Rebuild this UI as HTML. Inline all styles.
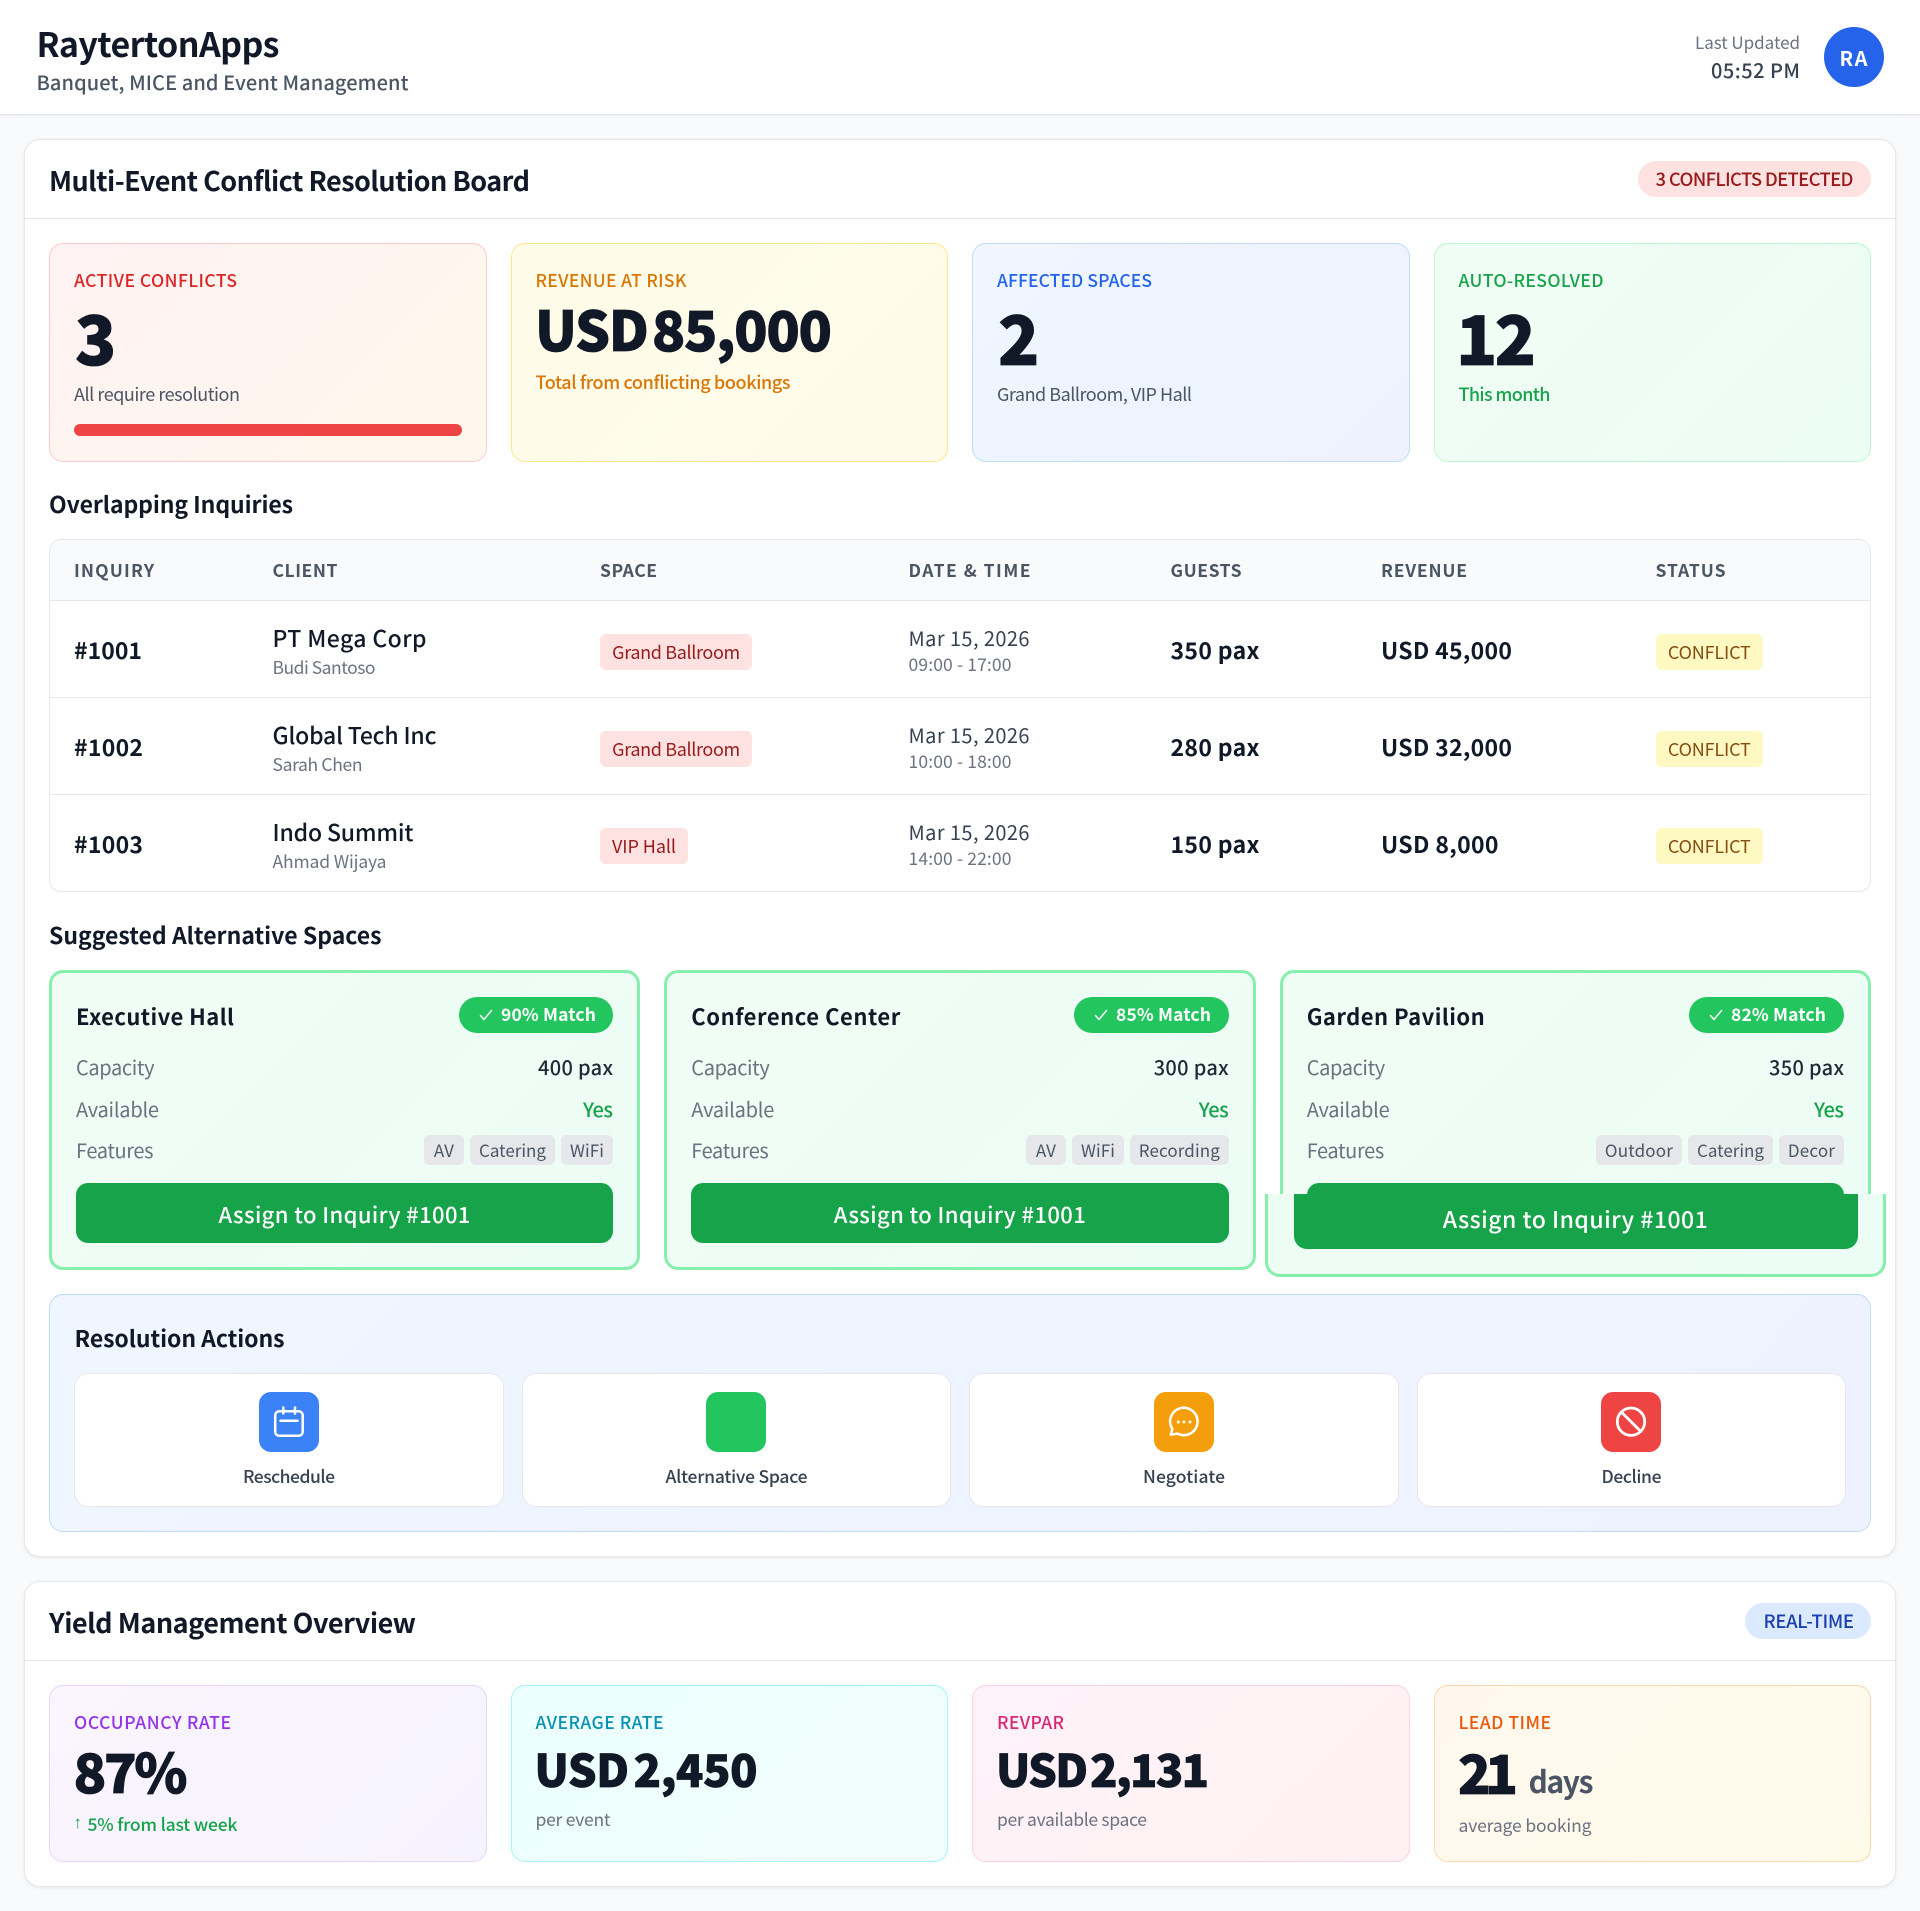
<!DOCTYPE html>
<html lang="en">
<head>
<meta charset="utf-8">
<title>RaytertonApps</title>
<style>
*{box-sizing:border-box;margin:0;padding:0}
html,body{width:1920px;height:1911px;overflow:hidden;background:#f9fafb}
body{position:relative;font-family:"Noto Sans CJK SC","Liberation Sans",sans-serif;color:#111827}
.b,.t{position:absolute}
.t{white-space:nowrap;line-height:40px;margin-top:-21px}
.card{background:#fff;border:1px solid #e5e7eb;border-radius:16px;box-shadow:0 1px 3px rgba(0,0,0,.08)}
.line{height:1px;background:#e5e7eb}
.stat{border-radius:14px;border:1px solid}
.tag{position:absolute;display:flex;align-items:center;justify-content:center;white-space:nowrap}
.sp{height:36px;background:#fee2e2;color:#991b1b;border-radius:6px;font-size:18px}
.st{height:36px;background:#fef9c3;color:#854d0e;border-radius:6px;font-size:18px}
.ft{height:30px;background:#e5e7eb;color:#4b5563;border-radius:6px;font-size:17px;padding-bottom:1px}
.alt{border:3px solid #86efac;border-radius:14px;background:linear-gradient(135deg,#f0fdf4,#ecfdf5)}
.match{height:36px;border-radius:18px;background:#22c55e;color:#fff;font-size:17px;font-weight:700}
.btn{position:absolute;background:#16a34a;color:#fff;border-radius:12px;display:flex;align-items:center;justify-content:center;font-weight:500;font-size:22px}
.act{background:#fff;border:1px solid #e5e7eb;border-radius:14px}
.ic{width:60px;height:60px;border-radius:12px}
.h{font-size:17.5px;font-weight:700;color:#4b5563;margin-top:-20px}
.n{font-weight:700;font-size:23px;margin-top:-22px}
.c{font-size:23px;font-weight:500;margin-top:-22px}
.s{font-size:17.5px;color:#6b7280;margin-top:-20px}
.d{font-size:20px;color:#374151}
.k{font-size:20px;color:#6b7280}
.v{font-size:20px;color:#1f2937;font-weight:500}
.y{font-size:20px;color:#16a34a;font-weight:500}
.l{font-size:17.5px;font-weight:500;margin-top:-20px}
.sec{font-size:23px;font-weight:700}
.big{font-weight:900;color:#111827;-webkit-text-stroke:.8px #111827}
.a{font-size:17.5px;font-weight:500;color:#374151;margin-top:-20px}
</style>
</head>
<body>
<div class="b" style="left:0;top:0;width:1920px;height:115px;background:#fff;border-bottom:1px solid #e5e7eb;box-shadow:0 1px 3px rgba(0,0,0,.06)"></div>
<h1 class="t" style="left:36.5px;top:44px;font-size:34px;font-weight:700;--w:243">RaytertonApps</h1>
<div class="t" style="left:36.5px;top:83px;font-size:20px;font-weight:500;color:#4b5563;--w:372">Banquet, MICE and Event Management</div>
<div class="t" style="left:1695px;top:43px;font-size:17px;color:#6b7280;--w:105">Last Updated</div>
<div class="t" style="left:1711px;top:71px;font-size:20px;font-weight:500;color:#374151;--w:89">05:52 PM</div>
<div class="b" style="left:1823.5px;top:27px;width:60px;height:60px;border-radius:50%;background:#2563eb"></div>
<div class="t" style="left:1839.5px;top:59px;font-size:20px;font-weight:700;color:#fff;--w:28">RA</div>

<!-- Conflict card -->
<div class="b card" style="left:24px;top:139px;width:1872px;height:1418px"></div>
<div class="b line" style="left:25px;top:218px;width:1870px"></div>
<h2 class="t" style="left:49px;top:181px;font-size:27px;font-weight:700;--w:481">Multi-Event Conflict Resolution Board</h2>
<div class="b" style="left:1638px;top:161px;width:233px;height:36px;border-radius:18px;background:#fee2e2"></div>
<div class="t" style="left:1655.5px;top:180px;font-size:18.5px;font-weight:500;color:#991b1b;--w:198">3 CONFLICTS DETECTED</div>

<div class="b stat" style="left:49px;top:243px;width:437.5px;height:219px;background:linear-gradient(135deg,#fef2f2,#fff7ed);border-color:#fecaca"></div>
<div class="b stat" style="left:510.5px;top:243px;width:437.5px;height:219px;background:linear-gradient(135deg,#fefce8,#fffbeb);border-color:#fde68a"></div>
<div class="b stat" style="left:972px;top:243px;width:437.5px;height:219px;background:linear-gradient(135deg,#eff6ff,#eef2ff);border-color:#bfdbfe"></div>
<div class="b stat" style="left:1433.5px;top:243px;width:437.5px;height:219px;background:linear-gradient(135deg,#f0fdf4,#ecfdf5);border-color:#bbf7d0"></div>

<div class="t l" style="left:74px;top:280.5px;color:#dc2626;--w:163">ACTIVE CONFLICTS</div>
<div class="t l" style="left:535.5px;top:280.5px;color:#d97706;--w:151">REVENUE AT RISK</div>
<div class="t l" style="left:997px;top:280.5px;color:#2563eb;--w:155">AFFECTED SPACES</div>
<div class="t l" style="left:1458.5px;top:280.5px;color:#16a34a;--w:145">AUTO-RESOLVED</div>

<div class="t big" style="left:75px;top:337px;font-size:68px;--w:39">3</div>
<div class="t big" style="left:535px;top:328px;font-size:55px;word-spacing:-7px;--w:297">USD 85,000</div>
<div class="t big" style="left:998px;top:337px;font-size:68px;--w:39">2</div>
<div class="t big" style="left:1456px;top:337px;font-size:68px;--w:80">12</div>

<div class="t" style="left:74px;top:395px;font-size:18px;color:#4b5563;--w:166">All require resolution</div>
<div class="b" style="left:74px;top:424px;width:388px;height:12px;border-radius:6px;background:#ef4444"></div>
<div class="t" style="left:535.5px;top:383px;font-size:18px;font-weight:500;color:#d97706;--w:255">Total from conflicting bookings</div>
<div class="t" style="left:997px;top:395px;font-size:18px;color:#4b5563;--w:195">Grand Ballroom, VIP Hall</div>
<div class="t" style="left:1458.5px;top:395px;font-size:18px;font-weight:500;color:#16a34a;--w:92">This month</div>

<!-- Table -->
<h3 class="t sec" style="left:49px;top:504px;--w:244">Overlapping Inquiries</h3>
<div class="b" style="left:49px;top:539px;width:1822px;height:353px;background:#fff;border:1px solid #e5e7eb;border-radius:12px;overflow:hidden">
  <div class="b" style="left:0;top:0;width:100%;height:61px;background:#f9fafb;border-bottom:1px solid #e5e7eb"></div>
  <div class="b line" style="left:0;top:157px;width:100%"></div>
  <div class="b line" style="left:0;top:254px;width:100%"></div>
</div>
<div class="t h" style="left:74px;top:570.5px;--w:80">INQUIRY</div>
<div class="t h" style="left:272.5px;top:570.5px;--w:65">CLIENT</div>
<div class="t h" style="left:600px;top:570.5px;--w:57">SPACE</div>
<div class="t h" style="left:908.5px;top:570.5px;--w:122">DATE &amp; TIME</div>
<div class="t h" style="left:1170.5px;top:570.5px;--w:71">GUESTS</div>
<div class="t h" style="left:1381px;top:570.5px;--w:86">REVENUE</div>
<div class="t h" style="left:1655.5px;top:570.5px;--w:70">STATUS</div>

<div class="t n" style="left:74px;top:651px;--w:68">#1001</div>
<div class="t c" style="left:272.5px;top:639px;--w:154">PT Mega Corp</div>
<div class="t s" style="left:272.5px;top:668px;--w:103">Budi Santoso</div>
<div class="tag sp" style="left:600px;top:634px;width:152px"><span style="--w:128">Grand Ballroom</span></div>
<div class="t d" style="left:908.5px;top:639px;--w:121">Mar 15, 2026</div>
<div class="t s" style="left:908.5px;top:665px;--w:103">09:00 - 17:00</div>
<div class="t n" style="left:1170.5px;top:651px;--w:89">350 pax</div>
<div class="t n" style="left:1381px;top:651px;--w:131">USD 45,000</div>
<div class="tag st" style="left:1655.5px;top:634px;width:107.5px"><span style="--w:83">CONFLICT</span></div>

<div class="t n" style="left:74px;top:748px;--w:69">#1002</div>
<div class="t c" style="left:272.5px;top:736px;--w:164">Global Tech Inc</div>
<div class="t s" style="left:272.5px;top:765px;--w:90">Sarah Chen</div>
<div class="tag sp" style="left:600px;top:731px;width:152px"><span style="--w:128">Grand Ballroom</span></div>
<div class="t d" style="left:908.5px;top:736px;--w:121">Mar 15, 2026</div>
<div class="t s" style="left:908.5px;top:762px;--w:103">10:00 - 18:00</div>
<div class="t n" style="left:1170.5px;top:748px;--w:89">280 pax</div>
<div class="t n" style="left:1381px;top:748px;--w:131">USD 32,000</div>
<div class="tag st" style="left:1655.5px;top:731px;width:107.5px"><span style="--w:83">CONFLICT</span></div>

<div class="t n" style="left:74px;top:845px;--w:69">#1003</div>
<div class="t c" style="left:272.5px;top:833px;--w:141">Indo Summit</div>
<div class="t s" style="left:272.5px;top:862px;--w:114">Ahmad Wijaya</div>
<div class="tag sp" style="left:600px;top:828px;width:88px"><span style="--w:64">VIP Hall</span></div>
<div class="t d" style="left:908.5px;top:833px;--w:121">Mar 15, 2026</div>
<div class="t s" style="left:908.5px;top:859px;--w:103">14:00 - 22:00</div>
<div class="t n" style="left:1170.5px;top:845px;--w:89">150 pax</div>
<div class="t n" style="left:1381px;top:845px;--w:117.5">USD 8,000</div>
<div class="tag st" style="left:1655.5px;top:828px;width:107.5px"><span style="--w:83">CONFLICT</span></div>

<!-- Alternatives -->
<h3 class="t sec" style="left:49px;top:935px;--w:332.5">Suggested Alternative Spaces</h3>
<div class="b alt" style="left:49px;top:970px;width:591.3px;height:300px"></div>
<div class="b alt" style="left:664.3px;top:970px;width:591.3px;height:300px"></div>
<div class="b alt" style="left:1279.7px;top:970px;width:591.3px;height:300px"></div>

<div class="t" style="left:76px;top:1017px;font-size:22px;font-weight:700;--w:158">Executive Hall</div>
<div class="tag match" style="left:459px;top:997px;width:154px"></div>
<svg class="b" style="left:479px;top:1009px" width="14" height="12" viewBox="0 0 14 12" fill="none" stroke="#fff" stroke-width="1.5" stroke-linecap="round" stroke-linejoin="round"><path d="M1.5 6.5 5 10.5 12.5 1.5"/></svg>
<div class="t" style="left:501px;top:1016px;font-size:17.5px;font-weight:700;color:#fff;--w:95">90% Match</div>
<div class="t k" style="left:76px;top:1068px;--w:78.5">Capacity</div>
<div class="t v" style="left:538px;top:1068px;--w:75">400 pax</div>
<div class="t k" style="left:76px;top:1110px;--w:83">Available</div>
<div class="t y" style="left:583px;top:1110px;--w:30">Yes</div>
<div class="t k" style="left:76px;top:1151px;--w:77.5">Features</div>
<div class="tag ft" style="left:424px;top:1135px;width:40px"><span style="--w:20">AV</span></div>
<div class="tag ft" style="left:470px;top:1135px;width:85px"><span style="--w:67">Catering</span></div>
<div class="tag ft" style="left:561px;top:1135px;width:52px"><span style="--w:34">WiFi</span></div>
<div class="btn" style="left:76px;top:1183px;width:537.3px;height:60px;padding-top:2px"><span style="--w:252">Assign to Inquiry #1001</span></div>

<div class="t" style="left:691.3px;top:1017px;font-size:22px;font-weight:700;--w:209">Conference Center</div>
<div class="tag match" style="left:1074px;top:997px;width:154.7px"></div>
<svg class="b" style="left:1094px;top:1009px" width="14" height="12" viewBox="0 0 14 12" fill="none" stroke="#fff" stroke-width="1.5" stroke-linecap="round" stroke-linejoin="round"><path d="M1.5 6.5 5 10.5 12.5 1.5"/></svg>
<div class="t" style="left:1116px;top:1016px;font-size:17.5px;font-weight:700;color:#fff;--w:95">85% Match</div>
<div class="t k" style="left:691.3px;top:1068px;--w:78.5">Capacity</div>
<div class="t v" style="left:1153.7px;top:1068px;--w:75">300 pax</div>
<div class="t k" style="left:691.3px;top:1110px;--w:83">Available</div>
<div class="t y" style="left:1198.7px;top:1110px;--w:30">Yes</div>
<div class="t k" style="left:691.3px;top:1151px;--w:77.5">Features</div>
<div class="tag ft" style="left:1026px;top:1135px;width:40px"><span style="--w:20">AV</span></div>
<div class="tag ft" style="left:1072px;top:1135px;width:52px"><span style="--w:34">WiFi</span></div>
<div class="tag ft" style="left:1130px;top:1135px;width:98.7px"><span style="--w:81">Recording</span></div>
<div class="btn" style="left:691.3px;top:1183px;width:537.3px;height:60px;padding-top:2px"><span style="--w:252">Assign to Inquiry #1001</span></div>

<div class="t" style="left:1306.7px;top:1017px;font-size:22px;font-weight:700;--w:178">Garden Pavilion</div>
<div class="tag match" style="left:1689px;top:997px;width:155px"></div>
<svg class="b" style="left:1709px;top:1009px" width="14" height="12" viewBox="0 0 14 12" fill="none" stroke="#fff" stroke-width="1.5" stroke-linecap="round" stroke-linejoin="round"><path d="M1.5 6.5 5 10.5 12.5 1.5"/></svg>
<div class="t" style="left:1731px;top:1016px;font-size:17.5px;font-weight:700;color:#fff;--w:95">82% Match</div>
<div class="t k" style="left:1306.7px;top:1068px;--w:78.5">Capacity</div>
<div class="t v" style="left:1769px;top:1068px;--w:75">350 pax</div>
<div class="t k" style="left:1306.7px;top:1110px;--w:83">Available</div>
<div class="t y" style="left:1814px;top:1110px;--w:30">Yes</div>
<div class="t k" style="left:1306.7px;top:1151px;--w:77.5">Features</div>
<div class="tag ft" style="left:1596px;top:1135px;width:86px"><span style="--w:68">Outdoor</span></div>
<div class="tag ft" style="left:1688px;top:1135px;width:85px"><span style="--w:67">Catering</span></div>
<div class="tag ft" style="left:1779px;top:1135px;width:65px"><span style="--w:47">Decor</span></div>
<div class="btn" style="left:1306.7px;top:1183px;width:537.3px;height:60px"></div>

<!-- Hover-scaled lower slice of the third card -->
<div class="b" style="left:1265px;top:1194px;width:621px;height:83px;background:linear-gradient(135deg,#eefdf3,#ecfdf5);border:3px solid #86efac;border-top:0;border-radius:0 0 15px 15px"></div>
<div class="btn" style="left:1293.5px;top:1194px;width:564px;height:55px;border-radius:0 0 13px 13px;padding-bottom:8px;font-size:23px"><span style="--w:265">Assign to Inquiry #1001</span></div>

<!-- Resolution actions -->
<div class="b" style="left:49px;top:1294px;width:1822px;height:238px;border:1px solid #bfdbfe;border-radius:14px;background:linear-gradient(135deg,#eff6ff,#eef2ff)"></div>
<h3 class="t sec" style="left:74.5px;top:1338px;--w:210">Resolution Actions</h3>
<div class="b act" style="left:74px;top:1373px;width:430px;height:134px"></div>
<div class="b act" style="left:522px;top:1373px;width:428.5px;height:134px"></div>
<div class="b act" style="left:969px;top:1373px;width:429.5px;height:134px"></div>
<div class="b act" style="left:1417px;top:1373px;width:429px;height:134px"></div>

<svg class="b ic" style="left:259px;top:1392px;background:#3b82f6" viewBox="0 0 60 60" fill="none" stroke="#fff" stroke-width="2.5" stroke-linecap="round"><rect x="16.2" y="19.3" width="27.5" height="24.5" rx="4"/><path d="M24.3 15.5v6M36 15.5v6M21.5 28.7h17"/></svg>
<div class="b ic" style="left:706px;top:1392px;background:#22c55e"></div>
<svg class="b ic" style="left:1154px;top:1392px;background:#f59e0b" viewBox="0 0 60 60" fill="none" stroke="#fff" stroke-width="2.5" stroke-linecap="round" stroke-linejoin="round"><path d="M23.5 41.6A13.7 13.7 0 1 0 18.4 37L16.8 42.6Z"/><g fill="#fff" stroke="none"><circle cx="24.3" cy="30" r="1.5"/><circle cx="30" cy="30" r="1.5"/><circle cx="36" cy="30" r="1.5"/></g></svg>
<svg class="b ic" style="left:1601px;top:1392px;background:#ef4444" viewBox="0 0 60 60" fill="none" stroke="#fff" stroke-width="2.8"><circle cx="30" cy="29.7" r="13.7"/><path d="M20.3 20 39.7 39.4"/></svg>

<div class="t a" style="left:243px;top:1477px;--w:92">Reschedule</div>
<div class="t a" style="left:665.5px;top:1477px;--w:142">Alternative Space</div>
<div class="t a" style="left:1143px;top:1477px;--w:82">Negotiate</div>
<div class="t a" style="left:1601.5px;top:1477px;--w:60">Decline</div>

<!-- Yield -->
<div class="b card" style="left:24px;top:1581px;width:1872px;height:306px"></div>
<div class="b line" style="left:25px;top:1660px;width:1870px"></div>
<h2 class="t" style="left:49px;top:1623px;font-size:27px;font-weight:700;--w:367">Yield Management Overview</h2>
<div class="b" style="left:1745px;top:1603px;width:126px;height:36px;border-radius:18px;background:#dbeafe"></div>
<div class="t" style="left:1763.5px;top:1622px;font-size:18.5px;font-weight:500;color:#1e40af;--w:90.5">REAL-TIME</div>

<div class="b stat" style="left:49px;top:1685px;width:437.5px;height:177px;background:linear-gradient(135deg,#faf5ff,#f5f3ff);border-color:#e9d5ff"></div>
<div class="b stat" style="left:510.5px;top:1685px;width:437.5px;height:177px;background:linear-gradient(135deg,#ecfeff,#f0fdfa);border-color:#a5f3fc"></div>
<div class="b stat" style="left:972px;top:1685px;width:437.5px;height:177px;background:linear-gradient(135deg,#fdf2f8,#fff1f2);border-color:#fbcfe8"></div>
<div class="b stat" style="left:1433.5px;top:1685px;width:437.5px;height:177px;background:linear-gradient(135deg,#fff7ed,#fffbeb);border-color:#fed7aa"></div>

<div class="t l" style="left:74px;top:1722.5px;color:#9333ea;--w:157">OCCUPANCY RATE</div>
<div class="t l" style="left:535.5px;top:1722.5px;color:#0891b2;--w:128">AVERAGE RATE</div>
<div class="t l" style="left:997px;top:1722.5px;color:#db2777;--w:67">REVPAR</div>
<div class="t l" style="left:1458.5px;top:1722.5px;color:#ea580c;--w:92.5">LEAD TIME</div>

<div class="t big" style="left:73.5px;top:1771px;font-size:54px;--w:114">87%</div>
<div class="t big" style="left:534.5px;top:1769px;font-size:45px;word-spacing:-5px;--w:223">USD 2,450</div>
<div class="t big" style="left:996px;top:1769px;font-size:45px;word-spacing:-5px;--w:213">USD 2,131</div>
<div class="t big" style="left:1458px;top:1772px;font-size:54px;--w:60">21</div>
<div class="t" style="left:1528.5px;top:1781px;font-size:30px;font-weight:700;color:#4b5563;--w:65">days</div>

<div class="t" style="left:73.5px;top:1824px;font-family:'Liberation Sans',sans-serif;font-size:17px;font-weight:400;color:#16a34a">↑</div>
<div class="t" style="left:87.5px;top:1826px;font-size:17.5px;font-weight:500;color:#16a34a;--w:150">5% from last week</div>
<div class="t" style="left:535.5px;top:1821px;font-size:17.5px;color:#6b7280;--w:75">per event</div>
<div class="t" style="left:997px;top:1821px;font-size:17.5px;color:#6b7280;--w:150">per available space</div>
<div class="t" style="left:1458.5px;top:1826.5px;font-size:17.5px;color:#6b7280;--w:133">average booking</div>

<script>
document.querySelectorAll('[style*="--w"]').forEach(function(e){
  var w=parseFloat(getComputedStyle(e).getPropertyValue('--w'));
  var a=e.getBoundingClientRect().width;
  var n=e.textContent.length;
  if(w&&a&&n>1)e.style.letterSpacing=((w-a)/(n-1)).toFixed(3)+'px';
});
</script>
</body>
</html>
